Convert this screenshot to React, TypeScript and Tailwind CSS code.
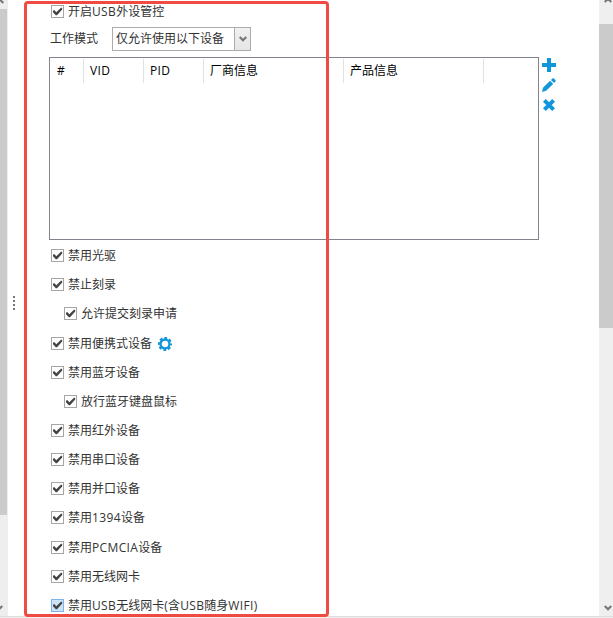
import React, { useState } from 'react';

type Option = { label: string; nested?: boolean; gear?: boolean; gap?: boolean; hot?: boolean };

const options: Option[] = [
  { label: '禁用光驱' },
  { label: '禁止刻录' },
  { label: '允许提交刻录申请', nested: true },
  { label: '禁用便携式设备', gear: true, gap: true },
  { label: '禁用蓝牙设备' },
  { label: '放行蓝牙键盘鼠标', nested: true },
  { label: '禁用红外设备' },
  { label: '禁用串口设备' },
  { label: '禁用并口设备' },
  { label: '禁用1394设备' },
  { label: '禁用PCMCIA设备', gap: true },
  { label: '禁用无线网卡' },
  { label: '禁用USB无线网卡(含USB随身WIFI)', hot: true },
];

// Latin runs are set slightly wider than the Chinese text around them.
function Label({ text }: { text: string }) {
  return (
    <span className="whitespace-nowrap leading-4">
      {text.split(/([A-Za-z0-9()]+)/).map((part, i) =>
        i % 2 ? <span key={i} className="tracking-[0.36px]">{part}</span> : part,
      )}
    </span>
  );
}

function CheckItem({ label, hot }: { label: string; hot?: boolean }) {
  const [checked, setChecked] = useState(true);
  return (
    <button type="button" role="checkbox" aria-checked={checked} onClick={() => setChecked(!checked)} className="flex items-center gap-1">
      <span className={`h-[13px] w-[13px] shrink-0 border ${hot ? 'border-[#7eb4ea] bg-[#cce4f7]' : 'border-[#a6a6a6] bg-white'}`}>
        {checked && (
          <svg viewBox="0 0 11 11" className="block h-[11px] w-[11px]" fill="#444">
            <path d="M1 4.7 2.2 4 4.3 6.3 9.2 1.6 10.2 2.2V3.6L5 9.2H3.8L1 6.2z" />
          </svg>
        )}
      </span>
      <Label text={label} />
    </button>
  );
}

function Chevron({ up = false }: { up?: boolean }) {
  return (
    <svg viewBox="0 0 8 6" className="block h-1.5 w-2 shrink-0" fill="none" stroke="#777" strokeWidth="2.2">
      <path d={up ? 'M.7 5 4 1.7 7.3 5' : 'M.7 1 4 4.3 7.3 1'} />
    </svg>
  );
}

function Gear() {
  return (
    <svg viewBox="0 0 14 14" className="block h-3.5 w-3.5" fill="none" stroke="#1296db">
      <circle cx="7" cy="7" r="4.5" strokeWidth="2.4" />
      <circle cx="7" cy="7" r="6.1" strokeWidth="2" strokeDasharray="2.8 1.99" strokeDashoffset="1.4" />
    </svg>
  );
}

const columns = [
  { label: '#', className: 'w-[34px] pl-[7px]' },
  { label: 'VID', className: 'w-[60px] pl-1.5' },
  { label: 'PID', className: 'w-[60px] pl-1.5' },
  { label: '厂商信息', className: 'w-[140px] pl-1.5' },
  { label: '产品信息', className: 'w-[140px] pl-1.5' },
];

export default function App() {
  return (
    <div className="relative flex h-[618px] w-[613px] flex-col overflow-hidden bg-white font-['Open_Sans','Noto_Sans_CJK_SC',sans-serif] text-[12px] text-[#333]">
      <div className="flex h-[616px]">
        <div className="flex w-2 shrink-0 flex-col bg-[#eee]">
          <div className="-mt-0.5 -ml-1 h-[11px]"><Chevron up /></div>
          <div className="h-[506px] w-[7px] bg-[#cbcbcb]" />
          <div className="-ml-[5px] mt-[90px]"><Chevron /></div>
        </div>
        <div className="flex w-[41px] shrink-0 flex-col gap-0.5 pl-[5px] pt-[296px]">
          <span className="h-0.5 w-0.5 bg-[#777]" />
          <span className="h-0.5 w-0.5 bg-[#777]" />
          <span className="h-0.5 w-0.5 bg-[#777]" />
          <span className="h-0.5 w-0.5 bg-[#777]" />
        </div>
        <main className="min-w-0 flex-1">
          <div className="flex h-[23px] items-center pl-0.5"><CheckItem label="开启USB外设管控" /></div>
          <div className="mt-1 flex h-6 items-center">
            <span className="w-[63px] pl-px leading-4">工作模式</span>
            <button type="button" className="flex h-6 w-[139px] items-stretch border border-[#ababab] bg-white">
              <span className="flex flex-1 items-center whitespace-nowrap pl-[3px] leading-4">仅允许使用以下设备</span>
              <span className="flex w-4 shrink-0 items-center justify-center border-l border-[#ababab] bg-linear-to-b from-[#f1f1f1] to-[#e6e6e6]"><Chevron /></span>
            </button>
          </div>
          <div className="mt-1.5 flex gap-[3px]">
            <div className="h-[183px] w-[490px] shrink-0 border border-[#82838c] pt-px text-black">
              <div className="flex h-6">
                {columns.map((c) => (
                  <div key={c.label} className={`flex shrink-0 items-center border-r border-[#e2e2e2] ${c.className}`}><Label text={c.label} /></div>
                ))}
              </div>
            </div>
            <div className="flex w-3.5 shrink-0 flex-col gap-1.5 pt-px">
              <svg viewBox="0 0 14 14" className="h-3.5 w-3.5" fill="#1296db"><path d="M5 0h4v5h5v4H9v5H5V9H0V5h5z" /></svg>
              <svg viewBox="0 0 14 14" className="h-3.5 w-3.5" fill="#1296db">
                <path d="M0 14 1 9.8 8.1 2.8 11.2 5.9 4.1 12.8z" />
                <path d="M9 1.9 10.4.6Q11.2 0 12 .6L13.4 2Q14 2.8 13.4 3.6L12.1 4.9z" />
              </svg>
              <svg viewBox="0 0 14 14" className="h-3.5 w-3.5" fill="none" stroke="#1296db" strokeWidth="4"><path d="m2.4 2.4 9.2 9.2M11.6 2.4l-9.2 9.2" /></svg>
            </div>
          </div>
          <div className="mt-px">
            {options.map((o) => (
              <div key={o.label} className={`flex h-[29px] items-center gap-1.5 ${o.nested ? 'pl-[15px]' : 'pl-0.5'} ${o.gap ? 'mt-px' : ''}`}>
                <CheckItem label={o.label} hot={o.hot} />
                {o.gear && <Gear />}
              </div>
            ))}
          </div>
        </main>
        <div className="flex w-3.5 shrink-0 flex-col items-center bg-[#efefef]">
          <div className="-mt-[3px] ml-1 h-[27px]"><Chevron up /></div>
          <div className="h-[304px] w-full bg-[#cbcbcb]" />
          <div className="ml-[3px] mt-[277px]"><Chevron /></div>
        </div>
      </div>
      <div className="h-0.5 border-t border-[#dcdcdc] bg-[#f0f0f0]" />
      <div className="pointer-events-none absolute left-6 top-px h-[616px] w-[305px] rounded-[4px] border-3 border-[#f04b43]" />
    </div>
  );
}
